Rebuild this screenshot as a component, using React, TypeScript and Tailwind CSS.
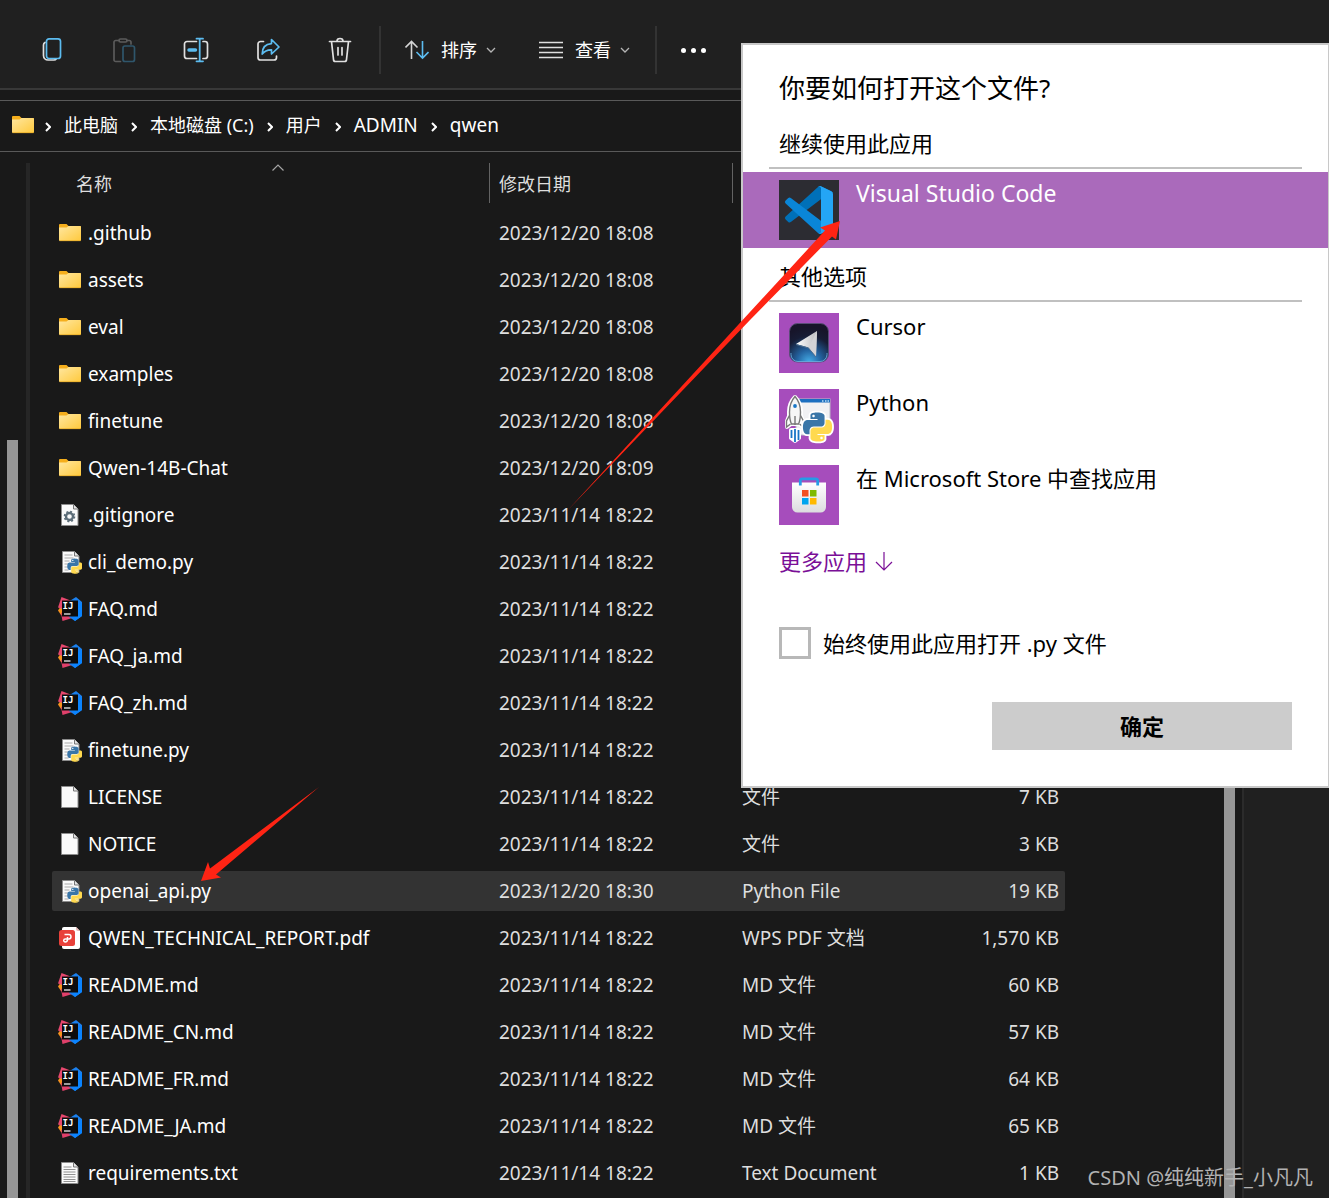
import type { ReactNode } from 'react';

type IconKind = 'folder' | 'gear' | 'python' | 'idea' | 'blank' | 'pdf' | 'text';

interface FileRow {
  name: string;
  icon: IconKind;
  date: string;
  type?: string;
  size?: string;
  selected?: boolean;
}

const files: FileRow[] = [
  { name: '.github', icon: 'folder', date: '2023/12/20 18:08' },
  { name: 'assets', icon: 'folder', date: '2023/12/20 18:08' },
  { name: 'eval', icon: 'folder', date: '2023/12/20 18:08' },
  { name: 'examples', icon: 'folder', date: '2023/12/20 18:08' },
  { name: 'finetune', icon: 'folder', date: '2023/12/20 18:08' },
  { name: 'Qwen-14B-Chat', icon: 'folder', date: '2023/12/20 18:09' },
  { name: '.gitignore', icon: 'gear', date: '2023/11/14 18:22' },
  { name: 'cli_demo.py', icon: 'python', date: '2023/11/14 18:22' },
  { name: 'FAQ.md', icon: 'idea', date: '2023/11/14 18:22' },
  { name: 'FAQ_ja.md', icon: 'idea', date: '2023/11/14 18:22' },
  { name: 'FAQ_zh.md', icon: 'idea', date: '2023/11/14 18:22' },
  { name: 'finetune.py', icon: 'python', date: '2023/11/14 18:22' },
  { name: 'LICENSE', icon: 'blank', date: '2023/11/14 18:22', type: '文件', size: '7 KB' },
  { name: 'NOTICE', icon: 'blank', date: '2023/11/14 18:22', type: '文件', size: '3 KB' },
  { name: 'openai_api.py', icon: 'python', date: '2023/12/20 18:30', type: 'Python File', size: '19 KB', selected: true },
  { name: 'QWEN_TECHNICAL_REPORT.pdf', icon: 'pdf', date: '2023/11/14 18:22', type: 'WPS PDF 文档', size: '1,570 KB' },
  { name: 'README.md', icon: 'idea', date: '2023/11/14 18:22', type: 'MD 文件', size: '60 KB' },
  { name: 'README_CN.md', icon: 'idea', date: '2023/11/14 18:22', type: 'MD 文件', size: '57 KB' },
  { name: 'README_FR.md', icon: 'idea', date: '2023/11/14 18:22', type: 'MD 文件', size: '64 KB' },
  { name: 'README_JA.md', icon: 'idea', date: '2023/11/14 18:22', type: 'MD 文件', size: '65 KB' },
  { name: 'requirements.txt', icon: 'text', date: '2023/11/14 18:22', type: 'Text Document', size: '1 KB' },
];

const crumbs = ['此电脑', '本地磁盘 (C:)', '用户', 'ADMIN', 'qwen'];

const SNAKE =
  'M14.25.18l.9.2.73.26.59.3.45.32.34.34.25.34.16.33.1.3.04.26.02.2-.01.13V8.5l-.05.63-.13.55-.21.46-.26.38-.3.31-.33.25-.35.19-.35.14-.33.1-.3.07-.26.04-.21.02H8.77l-.69.05-.59.14-.5.22-.41.27-.33.32-.27.35-.2.36-.15.37-.1.35-.07.32-.04.27-.02.21v3.06H3.17l-.21-.03-.28-.07-.32-.12-.35-.18-.36-.26-.36-.36-.35-.46-.32-.59-.28-.73-.21-.88-.14-1.05-.05-1.23.06-1.22.16-1.04.24-.87.32-.71.36-.57.4-.44.42-.33.42-.24.4-.16.36-.1.32-.05.24-.01h.16l.06.01h8.16v-.83H6.18l-.01-2.75-.02-.37.05-.34.11-.31.17-.28.25-.26.31-.23.38-.2.44-.18.51-.15.58-.12.64-.1.71-.06.77-.04.84-.02 1.27.05zm-6.3 1.98l-.23.33-.08.41.08.41.23.34.33.22.41.09.41-.09.33-.22.23-.34.08-.41-.08-.41-.23-.33-.33-.22-.41-.09-.41.09z';

function Snakes({ transform, outline }: { transform: string; outline?: boolean }) {
  return (
    <g transform={transform}>
      {outline && (
        <g fill="#fff" stroke="#fff" strokeWidth="3" strokeLinejoin="round">
          <path d={SNAKE} />
          <path d={SNAKE} transform="rotate(180 12 12)" />
        </g>
      )}
      <path d={SNAKE} fill="#3a76a8" />
      <path d={SNAKE} fill="#ffd94f" transform="rotate(180 12 12)" />
    </g>
  );
}

function FolderIcon() {
  return (
    <svg width="24" height="24" viewBox="0 0 24 24">
      <defs>
        <linearGradient id="folder" x1="0" y1="0" x2="1" y2="1">
          <stop offset="0" stopColor="#ffe7a0" />
          <stop offset="1" stopColor="#ffc93c" />
        </linearGradient>
      </defs>
      <path d="M1 4a1 1 0 0 1 1-1h6.500l2 2H22a1 1 0 0 1 1 1V10H1z" fill="#f5ae1c" />
      <path d="M1 6.500h7.500l2-1.500H22a1 1 0 0 1 1 1V19a1 1 0 0 1-1 1H2a1 1 0 0 1-1-1z" fill="url(#folder)" />
      <path d="M1.500 19.700h21" stroke="#e3a51f" strokeWidth=".7" />
    </svg>
  );
}

function Sheet({ x = 3.5, children }: { x?: number; children?: ReactNode }) {
  return (
    <svg width="24" height="24" viewBox="0 0 24 24">
      <g transform={`translate(${x} 0)`}>
        <path d="M0 1.500h12l4.500 4.500v16.500H0z" fill="#fafafa" stroke="#8c8c8c" strokeWidth="1" />
        <path d="M12 1.500v4.500h4.500" fill="#e4e4e4" stroke="#777" strokeWidth="1" />
      </g>
      {children}
    </svg>
  );
}

function IdeaIcon() {
  return (
    <svg width="24" height="24" viewBox="0 0 24 24">
      <path d="M0 13.500 3 9l4 2v8l-4-1z" fill="#f6921e" />
      <path d="M3.500 0 15 4.500 8 13 0 10.500z" fill="#e8486f" />
      <path d="M3 16l7-2 6 6.500L4.500 24z" fill="#e0406a" />
      <path d="M10 5 18 0l6 5v14l-7 5-6-4 6-8z" fill="#1b80ee" />
      <path d="M15 21 19 8l5-2v13l-7 5z" fill="#0a84ff" />
      <rect x="4" y="3.500" width="16" height="16" fill="#0c0c0c" />
      <text x="4.500" y="11.500" fill="#fff" fontSize="9" fontWeight="700" fontFamily="DejaVu Sans Mono, monospace">
        IJ
      </text>
      <path d="M6 17h6.500" stroke="#fff" strokeWidth="1.200" />
    </svg>
  );
}

function FileIcon({ kind }: { kind: IconKind }) {
  switch (kind) {
    case 'folder':
      return <FolderIcon />;
    case 'idea':
      return <IdeaIcon />;
    case 'gear':
      return (
        <Sheet>
          <circle cx="11.500" cy="13.500" r="3.500" fill="none" stroke="#5c6d78" strokeWidth="2.400" />
          <circle cx="11.500" cy="13.500" r="5" fill="none" stroke="#5c6d78" strokeWidth="1.600" strokeDasharray="2 1.930" />
        </Sheet>
      );
    case 'python':
      return (
        <Sheet x={4.5}>
          <path d="M6.500 5h8M6.500 8h9M6.500 11h5M6.500 14h4M6.500 17h4M6.500 20h4" stroke="#aaa" strokeWidth="1" />
          <Snakes transform="translate(9.300 8.600) scale(.63)" />
        </Sheet>
      );
    case 'text':
      return (
        <Sheet>
          <path d="M5.500 6h8M5.500 8.500h12M5.500 11h12M5.500 13.500h12M5.500 16h12M5.500 18.500h12M5.500 20.500h12" stroke="#929292" strokeWidth="1" />
        </Sheet>
      );
    case 'pdf':
      return (
        <svg width="24" height="24" viewBox="0 0 24 24">
          <path d="M6 1h12l4 4v16a2 2 0 0 1-2 2H6a2 2 0 0 1-2-2V3a2 2 0 0 1 2-2z" fill="#fff" />
          <path d="M18 1v2a2 2 0 0 0 2 2h2z" fill="#e9b8b4" />
          <rect x="1" y="4" width="16" height="16" rx="2.500" fill="#e8413a" />
          <path d="M6.500 8.500h4.300a2.200 2.200 0 0 1 0 4.400H7.200a1.500 1.500 0 0 0 0 3c1.800 0 2.300-.9 2.300-2.400V11" fill="none" stroke="#fff" strokeWidth="1.500" />
        </svg>
      );
    default:
      return <Sheet />;
  }
}

function ToolButton({ label, children }: { label: string; children: ReactNode }) {
  return (
    <button type="button" aria-label={label} className="flex h-12 w-[72px] items-center justify-center">
      <svg width="28" height="28" viewBox="0 0 28 28" fill="none" stroke="#e0e0e0" strokeWidth="1.700" strokeLinecap="round" strokeLinejoin="round">
        {children}
      </svg>
    </button>
  );
}

function Caret() {
  return (
    <svg width="10" height="6" viewBox="0 0 10 6" fill="none" stroke="#b5b5b5" strokeWidth="1.300">
      <path d="M1 1l4 4 4-4" />
    </svg>
  );
}

function Toolbar() {
  return (
    <header className="flex h-[90px] shrink-0 items-center border-b-2 border-[#383838] bg-[#202020] pt-3 pl-4 text-lg text-white">
      <ToolButton label="复制">
        <path d="M7 6.500C6 7 5.500 8 5.500 9v10.500A4.500 4.500 0 0 0 10 24h6c1 0 1.800-.4 2.300-1.200" />
        <rect x="8.500" y="2.800" width="14" height="19.700" rx="2.500" stroke="#5cbcf0" />
      </ToolButton>
      <ToolButton label="粘贴">
        <g stroke="#5b5b5b">
          <path d="M9 4.500H6A1.800 1.800 0 0 0 4 6.500v17A1.800 1.800 0 0 0 6 25.500h4.500M17 4.500h2a1.800 1.800 0 0 1 2 2v1.500" />
          <rect x="9" y="3" width="8" height="3" rx="1.500" />
        </g>
        <rect x="13" y="10" width="11.500" height="15.500" rx="2" stroke="#2f566b" />
      </ToolButton>
      <ToolButton label="重命名">
        <path d="M14.500 5.500H5A2.500 2.500 0 0 0 2.500 8v12A2.500 2.500 0 0 0 5 22.500h9.500M21 5.500h2A2.500 2.500 0 0 1 25.500 8v12a2.500 2.500 0 0 1-2.500 2.500h-2" />
        <path d="M14.500 2.700h6.500M14.500 25.300h6.500M17.700 3v22" stroke="#5cbcf0" strokeWidth="1.800" />
        <path d="M7 14h6.500" stroke="#5cbcf0" strokeWidth="3.500" />
      </ToolButton>
      <ToolButton label="共享">
        <path d="M9.500 5.500H6.500A2.500 2.500 0 0 0 4 8v13.500A2.500 2.500 0 0 0 6.500 24H20a2.500 2.500 0 0 0 2.500-2.500V20" />
        <path d="M17.500 3.500 25 11l-7.500 7v-4.200c-4.200-.2-7 1.200-9.300 4.200C8.200 12 11 8 17.500 7.600z" stroke="#5cbcf0" />
      </ToolButton>
      <ToolButton label="删除">
        <path d="M3.500 5.500h21M5.500 5.500l2 18a2 2 0 0 0 2 2h9a2 2 0 0 0 2-2l2-18M11 5a3 2.500 0 0 1 6 0M12 11.500v7.500M16 11.500v7.500" />
      </ToolButton>
      <div className="ml-[3px] h-12 w-0.5 bg-[#333]" />
      <button type="button" className="ml-6 flex h-12 items-center">
        <svg width="24" height="20" viewBox="0 0 24 20" fill="none" strokeWidth="1.600">
          <path d="M6.500 19V2M.5 7.500l6-6 6 6" stroke="#d5d5d5" />
          <path d="M17.500 1v17M11.500 12l6 6 6-6" stroke="#5cbcf0" />
        </svg>
        <span className="mr-[9px] ml-3">排序</span>
        <Caret />
      </button>
      <button type="button" className="ml-[43px] flex h-12 items-center">
        <svg width="24" height="18" viewBox="0 0 24 18" stroke="#e0e0e0" strokeWidth="1.500">
          <path d="M0 1.500h24M0 6.500h24M0 11.500h24M0 16.500h24" />
        </svg>
        <span className="mr-[9px] ml-3">查看</span>
        <Caret />
      </button>
      <div className="ml-[25px] h-12 w-0.5 bg-[#333]" />
      <button type="button" aria-label="更多" className="ml-6 flex h-12 items-center gap-1">
        <span className="size-[5px] rounded-full bg-white" />
        <span className="mx-px size-[5px] rounded-full bg-white" />
        <span className="size-[5px] rounded-full bg-white" />
      </button>
    </header>
  );
}

function Breadcrumbs() {
  return (
    <nav className="mt-[10px] flex h-[52px] shrink-0 items-center border-y border-[#595959] pb-0.5 pl-[11px] text-[18px] text-white">
      <span className="-mr-[3px]">
        <FolderIcon />
      </span>
      {crumbs.map((crumb) => (
        <span key={crumb} className="flex items-center">
          <svg width="6" height="10" viewBox="0 0 6 10" className="mx-[13px] mt-[3px]" fill="none" stroke="#fff" strokeWidth="2">
            <path d="M1 1l4 4-4 4" />
          </svg>
          <a href="#" className={/^\w+$/.test(crumb) ? 'text-[19px] whitespace-nowrap' : 'whitespace-nowrap'}>{crumb}</a>
        </span>
      ))}
    </nav>
  );
}

function FileTable() {
  return (
    <table className="mt-[4px] ml-[22px] w-[1013px] table-fixed border-separate border-spacing-x-0 border-spacing-y-[7px] self-start text-[19px] leading-6">
      <thead>
        <tr className="h-[43px] text-left align-top text-lg text-[#dedede]">
          <th className="w-[438px] p-0 font-normal">
            <div className="relative flex h-10 items-center border-r border-[#636363] pt-0.5 pl-6">
              名称
              <svg width="12" height="7" viewBox="0 0 12 7" className="absolute top-px left-[220px]" fill="none" stroke="#a5a5a5" strokeWidth="1.200">
                <path d="M.5 6.500 6 1l5.500 5.500" />
              </svg>
            </div>
          </th>
          <th className="w-[243px] p-0 font-normal">
            <div className="flex h-10 items-center border-r border-[#636363] pt-0.5 pl-[9px]">修改日期</div>
          </th>
          <th className="p-0" aria-label="类型" />
          <th className="w-[140px] p-0" aria-label="大小" />
        </tr>
      </thead>
      <tbody>
        {files.map((file) => (
          <tr key={file.name} className={file.selected ? 'h-10 bg-[#333]' : 'h-10'}>
            <td className="rounded-l-xs p-0 pl-[6px] text-white">
              <span className="flex items-center gap-[6px]">
                <FileIcon kind={file.icon} />
                {file.name}
              </span>
            </td>
            <td className="p-0 pl-[9px] text-[#dedede]">{file.date}</td>
            <td className="p-0 pl-[9px] text-[#dedede]">{file.type}</td>
            <td className="rounded-r-xs p-0 pr-[6px] text-right text-[#dedede]">{file.size}</td>
          </tr>
        ))}
      </tbody>
    </table>
  );
}

function VsCodeLogo() {
  return (
    <svg width="60" height="60" viewBox="0 0 60 60" className="bg-[#2c2c32]">
      <g transform="translate(6 6) scale(.48)">
        <path d="M96.460 10.800 75.860.870a6.230 6.230 0 0 0-7.100 1.200L1.300 63.580a4.170 4.170 0 0 0 0 6.170l5.510 5a4.170 4.170 0 0 0 5.320.240L93.360 13.400A4.140 4.140 0 0 1 100 16.700v-.24a6.250 6.250 0 0 0-3.540-5.630z" fill="#0070b8" />
        <path d="m96.460 89.170-20.600 9.920a6.230 6.230 0 0 1-7.100-1.210L1.300 36.390a4.170 4.170 0 0 1 0-6.170l5.510-5a4.170 4.170 0 0 1 5.320-.24l81.230 61.600a4.140 4.140 0 0 0 6.640-3.300v.24a6.250 6.250 0 0 1-3.540 5.650z" fill="#0a86d8" />
        <path d="M75.860 99.100a6.230 6.230 0 0 1-7.100-1.210A3.660 3.660 0 0 0 75 95.300V4.700a3.660 3.660 0 0 0-6.240-2.590 6.230 6.230 0 0 1 7.100-1.210l20.600 9.910a6.250 6.250 0 0 1 3.540 5.630v67.100a6.250 6.250 0 0 1-3.540 5.630z" fill="#24a5f5" />
      </g>
    </svg>
  );
}

function CursorLogo() {
  return (
    <svg width="60" height="60" viewBox="0 0 60 60" className="bg-[#a64dbc]">
      <defs>
        <radialGradient id="cursor-bg" cx=".5" cy="1" r=".9">
          <stop offset="0" stopColor="#45aee8" />
          <stop offset=".35" stopColor="#23629f" />
          <stop offset=".75" stopColor="#171c35" />
          <stop offset="1" stopColor="#17152a" />
        </radialGradient>
        <linearGradient id="cursor-arrow" x1="0" y1="0" x2="1" y2="0">
          <stop offset="0" stopColor="#fff" />
          <stop offset="1" stopColor="#bcbcc0" />
        </linearGradient>
      </defs>
      <rect x="10.500" y="10.500" width="39" height="38.500" rx="8" fill="url(#cursor-bg)" stroke="#5b4d78" strokeWidth="1" />
      <path d="M12 40v1.500a7 7 0 0 0 7 7h22a7 7 0 0 0 7-7V40" fill="none" stroke="#6cb4e4" strokeWidth=".8" />
      <path d="M38 18 17 31l12.500 3.500L37 43.500z" fill="url(#cursor-arrow)" />
      <path d="M38 18 29.500 34.500 37 43.500z" fill="#d3d3d6" />
      <path d="M17 31.500l12.500 3.500 7.500 9" fill="none" stroke="#4d6f91" strokeWidth="1" />
    </svg>
  );
}

function PythonLogo() {
  return (
    <svg width="60" height="60" viewBox="0 0 60 60" className="bg-[#a64dbc]">
      <rect x="17" y="10" width="34" height="36" fill="#f1f1f3" stroke="#b9bcc6" strokeWidth="1" />
      <path d="M17 10h34v3.500H17z" fill="#1c6fc0" />
      <path d="M43 12h1.500M46 12h1.500M48.500 12H50" stroke="#b8dcf5" strokeWidth="1.300" />
      <g stroke="#fff" strokeWidth="4" strokeLinejoin="round" fill="#fff">
        <path d="M16 8c-4 4-6 9-6 15v4l-2 5v6l4-3h8l4 3v-6l-2-5v-4c0-6-2-11-6-15zM12 41h8v8l-4 3-4-3z" />
      </g>
      <path d="M16 7.500c-4.500 5-5.500 10-5.500 15.500 0 5 .5 9 2 12h7c1.500-3 2-7 2-12 0-6-1.500-11-5.500-15.500z" fill="#f6f6f6" stroke="#777" strokeWidth="1.400" />
      <path d="M10.500 26.500 7.500 32v6l4-3M21.500 26.500l3 5.500v6l-4-3M16 27v9" fill="none" stroke="#777" strokeWidth="1.400" />
      <circle cx="16" cy="17" r="1.900" fill="#1976c6" />
      <path d="M12.500 41v8M16 40v13M19.500 41v10" stroke="#1976c6" strokeWidth="1.800" />
      <Snakes transform="translate(24 23.500) scale(1.210)" outline />
    </svg>
  );
}

function StoreLogo() {
  return (
    <svg width="60" height="60" viewBox="0 0 60 60" className="bg-[#a64dbc]">
      <defs>
        <linearGradient id="bag" x1="0" y1="0" x2="0" y2="1">
          <stop offset="0" stopColor="#fff" />
          <stop offset="1" stopColor="#dcdcdf" />
        </linearGradient>
      </defs>
      <path d="M13 17.500h34V42a5.500 5.500 0 0 1-5.500 5.500h-23A5.500 5.500 0 0 1 13 42z" fill="url(#bag)" />
      <path d="M21.300 20.500v-4.700a2 2 0 0 1 2-2h13.400a2 2 0 0 1 2 2v4.700" fill="none" stroke="#269be6" strokeWidth="2.800" />
      <path d="M23 25h6.500v6.500H23z" fill="#f25022" />
      <path d="M31 25h6.500v6.500H31z" fill="#7fba00" />
      <path d="M23 33h6.500v6.500H23z" fill="#00a4ef" />
      <path d="M31 33h6.500v6.500H31z" fill="#ffb900" />
    </svg>
  );
}

function AppOption({ name, logo, active }: { name: string; logo: ReactNode; active?: boolean }) {
  return (
    <button
      type="button"
      className={
        active
          ? 'flex h-[76px] w-full items-start gap-[17px] bg-[#aa6abb] py-2 pl-9 text-left text-[23px] text-white'
          : 'flex h-[76px] w-full items-start gap-[17px] py-2 pl-9 text-left'
      }
    >
      {logo}
      <span className="leading-[26px]">{name}</span>
    </button>
  );
}

function OpenWithDialog() {
  return (
    <section
      role="dialog"
      aria-labelledby="open-with-title"
      className="absolute top-[43px] right-0 w-[588px] border-2 border-r border-[#c8c8c8] bg-white pt-[23px] pb-9 text-[22px] text-black"
    >
      <h1 id="open-with-title" className="pl-9 text-[26px] leading-10">你要如何打开这个文件?</h1>
      <h2 className="mt-[19px] pl-9 leading-8">继续使用此应用</h2>
      <hr className="mt-2 mr-[26px] mb-[3px] ml-[26px] border-t-2 border-[#c0c0c0]" />
      <AppOption name="Visual Studio Code" logo={<VsCodeLogo />} active />
      <h2 className="mt-3 pl-9 leading-8">其他选项</h2>
      <hr className="mt-2 mr-[26px] mb-[3px] ml-[26px] border-t-2 border-[#c0c0c0]" />
      <AppOption name="Cursor" logo={<CursorLogo />} />
      <AppOption name="Python" logo={<PythonLogo />} />
      <AppOption name="在 Microsoft Store 中查找应用" logo={<StoreLogo />} />
      <button type="button" className="mt-3 ml-9 flex items-center gap-2 leading-8 text-[#7a0f97]">
        更多应用
        <svg width="18" height="20" viewBox="0 0 18 20" fill="none" stroke="#7a0f97" strokeWidth="1.200">
          <path d="M9 1v18M1 11l8 8 8-8" />
        </svg>
      </button>
      <div className="mt-[50px] ml-9 flex items-center gap-3">
        <input id="always" type="checkbox" className="size-8 appearance-none border-[3px] border-[#b8b8b8] bg-white" />
        <label htmlFor="always" className="leading-8">始终使用此应用打开 .py 文件</label>
      </div>
      <button type="button" className="mt-[43px] mr-9 ml-auto block h-12 w-[300px] bg-[#ccc] font-bold">
        确定
      </button>
    </section>
  );
}

export default function App() {
  return (
    <div className="relative flex h-screen flex-col overflow-hidden bg-[#191919] font-['Noto_Sans','Noto_Sans_CJK_SC',sans-serif]">
      <Toolbar />
      <Breadcrumbs />
      <main className="flex min-h-0 flex-1">
        <aside className="flex w-[26px] shrink-0 pt-[288px] pl-[7px]">
          <div className="w-[11px] bg-[#969696]" />
        </aside>
        <div className="mt-[11px] w-1 shrink-0 bg-[#262626]" />
        <FileTable />
        <div className="flex min-w-0 flex-1 pl-[159px]">
          <div className="w-[11px] shrink-0 bg-[#969696]" />
          <div className="ml-[7px] flex-1 border-l-2 border-[#2b2b2b] bg-[#202020]" />
        </div>
      </main>

      <OpenWithDialog />

      {/* red pointers: one to the chosen app, one to the selected file */}
      <svg width="276" height="292" viewBox="566 220 276 292" className="pointer-events-none absolute top-[220px] left-[566px]" fill="#ff2414">
        <path d="M567.500 510.500 825 230.500 820 227.500 840 221 836 239.500 832 236.500 750 320z" />
      </svg>
      <svg width="120" height="98" viewBox="200 785 120 98" className="pointer-events-none absolute top-[785px] left-[200px]" fill="#ff2414">
        <path d="M319 787 210 868.500 208 862 201 881 221 877.500 216 874.500z" />
      </svg>

      <p className="absolute right-4 bottom-1 text-xl leading-8 text-[#b2b2b2]">CSDN @纯纯新手_小凡凡</p>
    </div>
  );
}
